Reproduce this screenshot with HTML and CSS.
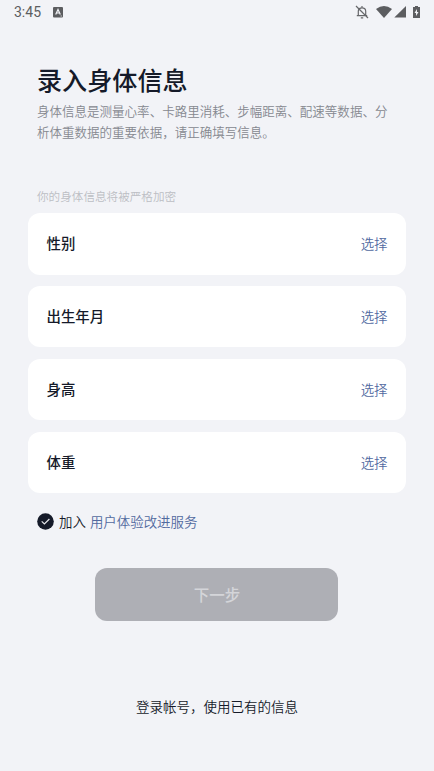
FILE: index.html
```html
<!DOCTYPE html>
<html lang="zh-CN">
<head>
<meta charset="utf-8">
<title>录入身体信息</title>
<link rel="stylesheet" href="styles.css">
</head>
<body>
<header class="status">
  <span class="time">3:45</span>
  <svg class="app" width="10" height="11" viewBox="0 0 10 11"><rect width="10" height="10.5" rx="1" fill="#5c5d60"/><path d="M2.7 7.5 5 2.5l2.3 5M3.6 6h2.8" fill="none" stroke="#f2f3f7" stroke-width="1.2"/><path d="M7.5 9h1.5" stroke="#f2f3f7" stroke-width=".7"/></svg>
  <svg class="bell" width="14" height="14" viewBox="0 0 14 14" fill="none" stroke="#66676a" stroke-width="1.2"><path d="M3.3 10.5V6.3c0-4.6 7.4-4.6 7.4 0v4.2M1.8 10.7h10.4M1 1l12 12M7 1v2M5.8 12.8h2.4"/></svg>
  <svg class="wifi" width="16" height="12" viewBox="0 0 16 12"><path d="M0 3Q8-3 16 3L8 12Z" fill="#5c5d60"/></svg>
  <svg class="signal" width="12" height="12" viewBox="0 0 12 12"><path d="M12 0v11.5H.3Z" fill="#5c5d60"/></svg>
  <svg class="battery" width="7" height="12" viewBox="0 0 7 12"><path d="M2 0h3v1h2v11H0V1h2Z" fill="#5c5d60"/><path d="M4 3 1.5 7H3v3l2.5-4H4Z" fill="#f2f3f7"/></svg>
</header>
<main>
  <h1>录入身体信息</h1>
  <p class="intro">身体信息是测量心率、卡路里消耗、步幅距离、配速等数据、分析体重数据的重要依据，请正确填写信息。</p>
  <p class="note">你的身体信息将被严格加密</p>
  <div class="cards">
    <div class="card"><b>性别</b><span>选择</span></div>
    <div class="card"><b>出生年月</b><span>选择</span></div>
    <div class="card"><b>身高</b><span>选择</span></div>
    <div class="card"><b>体重</b><span>选择</span></div>
  </div>
  <div class="join"><svg width="17" height="17" viewBox="0 0 17 17"><circle cx="8.5" cy="8.5" r="8.3" fill="#151a29"/><path d="m4.7 8.4 2.7 2.6 5-5" fill="none" stroke="#e4e5e9" stroke-width="1.2"/></svg><span>加入</span><a>用户体验改进服务</a></div>
  <button class="next">下一步</button>
  <p class="login">登录帐号，使用已有的信息</p>
</main>
</body>
</html>
```
FILE: styles.css
```css
* { box-sizing: border-box; }
body { margin: 0; height: 771px; overflow: hidden; background: #f2f3f7; color: #151a29; font-family: Roboto, "Noto Sans CJK SC", sans-serif; font-weight: 350; }
.status { height: 24px; display: flex; align-items: center; padding: 0 14px; }
.time { font-size: 14px; font-weight: 400; color: #5c5d60; width: 39px; }
.bell { margin-left: auto; }
.wifi { margin-left: 7px; }
.signal { margin-left: 2px; }
.battery { margin-left: 7px; }
main { padding: 0 28px; }
h1, p { margin: 0; }
h1 { margin: 39px 9px 0; font-size: 25.1px; line-height: 38px; font-weight: 500; }
.intro { margin: -.5px 9px 0; font-size: 12.53px; line-height: 21.5px; color: #85888f; width: 353px; }
.note { margin: 43.5px 9px 6.3px; font-size: 11.6px; line-height: 20px; color: #bcbec4; }
.cards { display: flex; flex-direction: column; gap: 11.6px; }
.card { height: 61.3px; border-radius: 12px; background: #fff; display: flex; align-items: center; justify-content: space-between; padding: 0 18.5px 2px 18.5px; }
.card b { font-size: 14.4px; font-weight: 500; }
.card span { font-size: 13.4px; color: #526a9f; }
.join { display: flex; align-items: center; height: 20px; margin: 18px 9px 0; font-size: 13.45px; }
.join span { margin: -1px 4px 0 5px; }
.join a { margin-top: -1px; color: #526a9f; }
.next { display: block; width: 243px; height: 53px; margin: 37px auto 0 67.4px; padding: 0 0 2px; border: 0; border-radius: 12px; background: #aeafb5; color: #d4d5d9; font: 500 15.5px Roboto, "Noto Sans CJK SC", sans-serif; }
.login { margin-top: 76px; text-align: center; font-size: 13.5px; line-height: 20px; }
```
